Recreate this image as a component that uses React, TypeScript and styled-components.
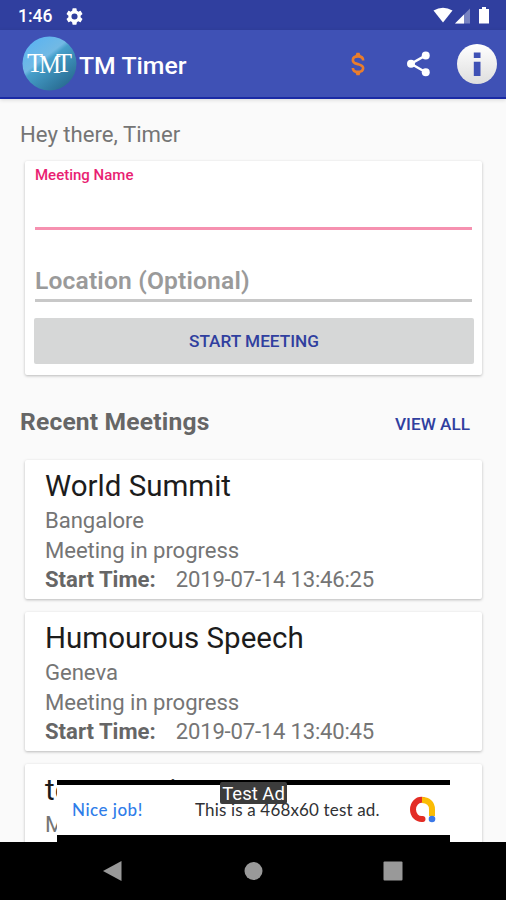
import React from "react";
import styled, { createGlobalStyle } from "styled-components";

const GlobalStyle = createGlobalStyle`
  * { box-sizing: border-box; }
  body { margin: 0; background: #fafafa; font-family: Roboto, "Noto Sans", sans-serif; }
`;

const Screen = styled.div`
  position: relative;
  display: flex;
  flex-direction: column;
  width: 506px;
  height: 900px;
  overflow: hidden;
  background: #fafafa;
`;

const StatusBar = styled.div`
  display: flex;
  align-items: center;
  flex: 0 0 30px;
  padding: 2px 15px 0 18px;
  background: #303f9f;
  color: #fff;
`;

const Clock = styled.span`
  width: 48px;
  font-size: 17.5px;
  font-weight: 500;
  line-height: 28px;
`;

const StatusIcons = styled.div`
  display: flex;
  align-items: center;
  margin-left: auto;
`;

const Toolbar = styled.header`
  display: flex;
  align-items: center;
  flex: 0 0 69px;
  padding: 0 8px 1px 22px;
  background: #3f51b5;
  border-bottom: 2px solid #1a2aa5;
  box-shadow: 0 1px 4px rgba(0, 0, 0, 0.14);
`;

const AppTitle = styled.h1`
  margin: 5px 0 0 2px;
  flex: 1;
  color: #fff;
  font-size: 24.8px;
  font-weight: 500;
  line-height: 30px;
`;

const Actions = styled.div`
  display: flex;
  align-items: center;
  padding-top: 1px;
`;

const IconButton = styled.button<{ $width: number; $align?: string }>`
  display: flex;
  align-items: center;
  justify-content: ${(p) => p.$align ?? "center"};
  width: ${(p) => p.$width}px;
  height: 48px;
  padding: 0;
  border: 0;
  background: none;
`;

const Content = styled.main`
  flex: 1;
  min-height: 0;
  overflow: hidden;
  padding: 22px 24px 0 25px;
`;

const Greeting = styled.p`
  margin: 0 0 0 -5px;
  height: 40px;
  color: #757575;
  font-size: 22.15px;
  line-height: 27px;
`;

const Card = styled.section`
  background: #fff;
  border-radius: 2px;
  box-shadow: 0 1px 3px rgba(0, 0, 0, 0.26);
`;

const FormCard = styled(Card)`
  height: 214px;
  padding: 0 10px;
`;

const Field = styled.div<{ $active?: boolean }>`
  display: flex;
  flex-direction: column;
  justify-content: ${(p) => (p.$active ? "flex-start" : "flex-end")};
  height: ${(p) => (p.$active ? 69 : 72)}px;
  padding-top: ${(p) => (p.$active ? 5 : 0)}px;
  padding-bottom: ${(p) => (p.$active ? 0 : 3)}px;
  border-bottom: 3px solid ${(p) => (p.$active ? "#f691b0" : "#c8c8c8")};
`;

const Label = styled.label<{ $active?: boolean }>`
  color: ${(p) => (p.$active ? "#e91e72" : "#9a9a9a")};
  font-size: ${(p) => (p.$active ? 15 : 24.6)}px;
  font-weight: ${(p) => (p.$active ? 500 : 600)};
  line-height: ${(p) => (p.$active ? 18 : 30)}px;
  letter-spacing: ${(p) => (p.$active ? 0 : 0.17)}px;
`;

const StartButton = styled.button`
  display: block;
  width: 440px;
  height: 46px;
  margin: 16px 0 0 -1px;
  padding: 0;
  border: 0;
  border-radius: 2px;
  background: #d6d7d7;
  color: #303f9f;
  font: 500 17.2px/46px Roboto, sans-serif;
`;

const SectionHeader = styled.div`
  display: flex;
  align-items: center;
  justify-content: space-between;
  height: 85px;
  margin-left: -5px;
  padding: 8px 12px 0 0;
`;

const SectionTitle = styled.h2`
  margin: 0;
  color: #666;
  font-size: 24.6px;
  font-weight: 700;
  line-height: 30px;
  letter-spacing: 0.18px;
`;

const ViewAll = styled.a`
  padding-top: 5px;
  color: #303f9f;
  font-size: 17.2px;
  font-weight: 500;
`;

const MeetingCard = styled(Card)`
  height: 139px;
  margin-bottom: 13px;
  padding: 7px 20px 0;
`;

const MeetingName = styled.h3`
  margin: 0;
  height: 38px;
  color: #1c1c1c;
  font-size: 29.5px;
  font-weight: 400;
  line-height: 39px;
  white-space: nowrap;
`;

const Detail = styled.div`
  display: flex;
  gap: 20px;
  height: 29.7px;
  color: #757575;
  font-size: 22.1px;
  line-height: 30px;
  letter-spacing: -0.04px;
`;

const Strong = styled.span`
  font-weight: 700;
  color: #666;
  letter-spacing: 0;
`;

const StartTime = styled.time`
  letter-spacing: -0.21px;
`;

const AdBanner = styled.aside`
  position: absolute;
  left: 57px;
  bottom: 58px;
  width: 393px;
  height: 62px;
  display: flex;
  align-items: center;
  padding: 0 14px 2px 15px;
  border-top: 5px solid #000;
  border-bottom: 7px solid #000;
  background: #fff;
  color: #303134;
  font-family: Lato, sans-serif;
  font-size: 17px;
`;

const AdPraise = styled.strong`
  width: 123px;
  padding-top: 1px;
  color: #2f7de9;
  font-weight: 500;
  letter-spacing: 0.5px;
`;

const AdText = styled.span`
  flex: 1;
  padding-top: 1px;
  letter-spacing: 0.16px;
  white-space: nowrap;
`;

const AdBadge = styled.span`
  position: absolute;
  left: 163px;
  top: -3px;
  width: 67px;
  height: 22px;
  border-radius: 2px;
  background: #3c3c3c;
  color: #fff;
  font: 400 18.5px/24px Roboto, sans-serif;
  text-align: center;
  white-space: nowrap;
`;

const NavBar = styled.nav`
  display: flex;
  align-items: center;
  justify-content: space-between;
  flex: 0 0 58px;
  padding: 0 103px;
  background: #000;
`;

const meetings = [
  { name: "World Summit", place: "Bangalore", start: "2019-07-14 13:46:25" },
  { name: "Humourous Speech", place: "Geneva", start: "2019-07-14 13:40:45" },
  { name: "test meeting", place: "M", start: "" },
];

const gearPath =
  "M19.14 12.94c.04-.3.06-.61.06-.94 0-.32-.02-.64-.07-.94l2.03-1.58a.49.49 0 0 0 .12-.61l-1.92-3.32a.49.49 0 0 0-.59-.22l-2.39.96a7 7 0 0 0-1.62-.94l-.36-2.54A.48.48 0 0 0 13.92 2.4h-3.84a.48.48 0 0 0-.47.41l-.36 2.54c-.59.24-1.13.57-1.62.94l-2.39-.96a.49.49 0 0 0-.59.22L2.74 8.87a.48.48 0 0 0 .12.61l2.03 1.58c-.05.3-.09.63-.09.94s.02.64.07.94l-2.03 1.58a.49.49 0 0 0-.12.61l1.92 3.32c.12.22.37.29.59.22l2.39-.96c.5.38 1.03.7 1.62.94l.36 2.54c.05.24.24.41.48.41h3.84c.24 0 .44-.17.47-.41l.36-2.54a7 7 0 0 0 1.62-.94l2.39.96c.22.08.47 0 .59-.22l1.92-3.32a.48.48 0 0 0-.12-.61zM12 15.6a3.6 3.6 0 1 1 0-7.2 3.6 3.6 0 0 1 0 7.2z";

const Logo = () => (
  <svg width="55" height="55" viewBox="0 0 55 55">
    <defs>
      <linearGradient id="globe" x1="0.15" y1="0.1" x2="0.8" y2="0.95">
        <stop offset="0" stopColor="#5db4f0" />
        <stop offset="0.36" stopColor="#72b9e4" />
        <stop offset="0.44" stopColor="#469fca" />
        <stop offset="1" stopColor="#286b91" />
      </linearGradient>
    </defs>
    <circle cx="27.5" cy="27.5" r="27" fill="url(#globe)" />
    <g fill="#fff" fontFamily="Liberation Serif, serif">
      <text x="5" y="35.500" fontSize="27" textLength="16" lengthAdjust="spacingAndGlyphs">T</text>
      <text x="17" y="37" fontSize="25" textLength="22" lengthAdjust="spacingAndGlyphs">M</text>
      <text x="34" y="35.500" fontSize="27" textLength="16" lengthAdjust="spacingAndGlyphs">T</text>
    </g>
  </svg>
);

const AboutIcon = () => (
  <svg width="42" height="42" viewBox="0 0 42 42">
    <defs>
      <linearGradient id="disc" x1="0" y1="0" x2="0" y2="1">
        <stop offset="0" stopColor="#fff" />
        <stop offset="1" stopColor="#dedede" />
      </linearGradient>
    </defs>
    <circle cx="21" cy="21" r="20" fill="url(#disc)" />
    <path fill="#3f51b5" d="M17.800 9.500h6.700v5.500h-6.700zM17.800 18.800h6.700V33h-6.700z" />
  </svg>
);

export default function App() {
  return (
    <Screen>
      <GlobalStyle />
      <StatusBar>
        <Clock>1:46</Clock>
        <svg width="17" height="17" viewBox="2 2 20 20"><path fill="#fff" d={gearPath} /></svg>
        <StatusIcons>
          <svg width="58" height="20" viewBox="0 0 58 20">
            <path fill="#fff" d="M0.500 4.600Q10-1.200 19.500 4.600L10 16.500z" />
            <path fill="#7883c1" d="M37 2.500V17.500H22z" />
            <path fill="#fff" d="M31 8.500V17.500H22z" />
            <path fill="#fff" d="M46 3h3V1h4v2h3v14.500h-10z" />
          </svg>
        </StatusIcons>
      </StatusBar>
      <Toolbar>
        <Logo />
        <AppTitle>TM Timer</AppTitle>
        <Actions>
          <IconButton $width={60} aria-label="Donate">
            <svg width="30" height="30" viewBox="0 0 24 24">
              <path fill="none" stroke="#ea7d2c" strokeWidth="2.100" d="M16.100 9.100C16.100 6.900 14.500 5.900 12 5.900S7.900 6.900 7.900 8.900C7.900 11.300 9.900 11.500 12 12.100S16.100 13.200 16.100 15.200C16.100 17.300 14.500 18.300 12 18.300S7.900 17.300 7.900 15.100" />
              <path fill="#ea7d2c" d="M9.800 5.500L10.800 3h2.400l1 2.500zM9.800 18.500l1 2.500h2.400l1-2.500z" />
            </svg>
          </IconButton>
          <IconButton $width={60} aria-label="Share">
            <svg width="29" height="29" viewBox="0 0 24 24">
              <path fill="none" stroke="#fff" strokeWidth="2" d="M18 5.300L5.800 12.200l12.200 7" />
              <g fill="#fff"><circle cx="18" cy="5.300" r="3.300" /><circle cx="5.800" cy="12.200" r="3.300" /><circle cx="18" cy="19.200" r="3.300" /></g>
            </svg>
          </IconButton>
          <IconButton $width={50} $align="flex-end" aria-label="About">
            <AboutIcon />
          </IconButton>
        </Actions>
      </Toolbar>
      <Content>
        <Greeting>Hey there, Timer</Greeting>
        <FormCard>
          <Field $active><Label $active>Meeting Name</Label></Field>
          <Field><Label>Location (Optional)</Label></Field>
          <StartButton>START MEETING</StartButton>
        </FormCard>
        <SectionHeader>
          <SectionTitle>Recent Meetings</SectionTitle>
          <ViewAll>VIEW ALL</ViewAll>
        </SectionHeader>
        {meetings.map((m) => (
          <MeetingCard key={m.name}>
            <MeetingName>{m.name}</MeetingName>
            <Detail>{m.place}</Detail>
            {m.start && (
              <>
                <Detail>Meeting in progress</Detail>
                <Detail><Strong>Start Time:</Strong><StartTime>{m.start}</StartTime></Detail>
              </>
            )}
          </MeetingCard>
        ))}
      </Content>
      <NavBar>
        <svg width="19" height="22" viewBox="0 0 19 22"><path fill="#999" d="M18.500 1v20L0 11z" /></svg>
        <svg width="20" height="20" viewBox="0 0 20 20"><circle cx="10.500" cy="10" r="9" fill="#999" /></svg>
        <svg width="20" height="20" viewBox="0 0 20 20"><rect x="0.500" y="0.500" width="19" height="19" rx="1" fill="#999" /></svg>
      </NavBar>
      <AdBanner>
        <AdPraise>Nice job!</AdPraise>
        <AdText>This is a 468x60 test ad.</AdText>
        <svg width="27" height="27" viewBox="0 0 27 27">
          <g fill="none" strokeWidth="6">
            <path stroke="#e32d25" strokeLinecap="round" d="M14 4C8 3 4 8 4 13.500S8 23.500 13.500 23" />
            <path stroke="#fbbc04" d="M13 4C19 4 23 7.500 23 13.500V20" />
          </g>
          <circle cx="23" cy="23" r="3.300" fill="#3b78e7" />
        </svg>
        <AdBadge>Test Ad</AdBadge>
      </AdBanner>
    </Screen>
  );
}
